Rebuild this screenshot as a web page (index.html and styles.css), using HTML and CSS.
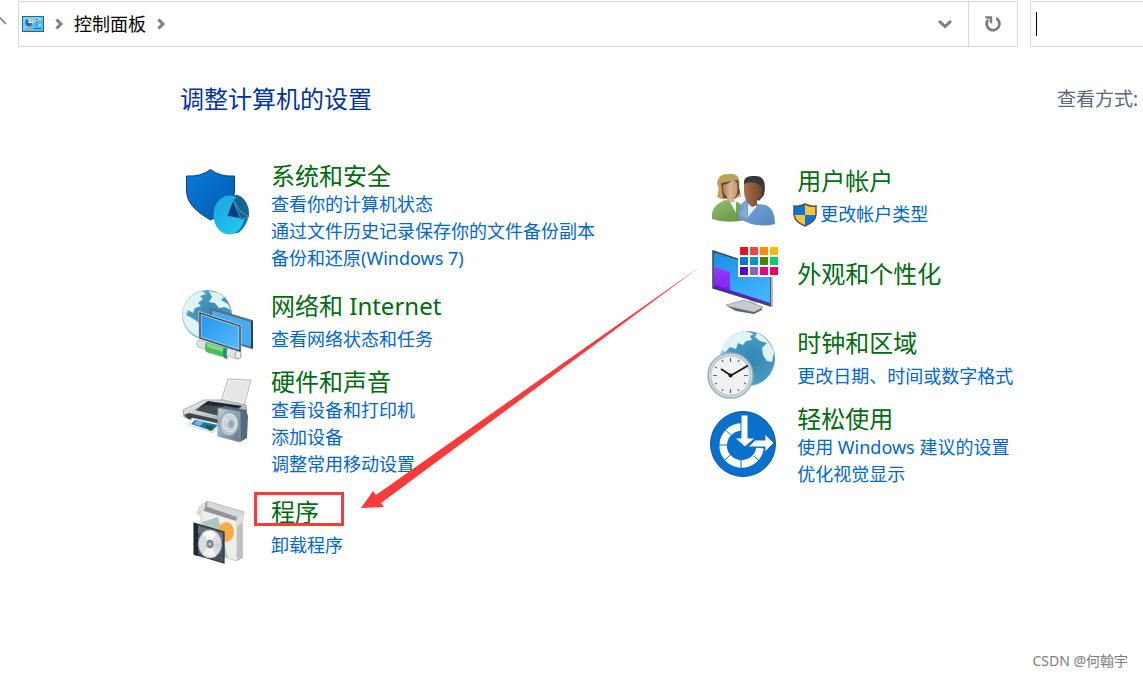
FILE: index.html
```html
<!DOCTYPE html>
<html lang="zh-CN">

<head>
  <meta charset="UTF-8">
  <meta name="viewport" content="width=device-width, initial-scale=1.0">
  <title>控制面板</title>
  <link rel="stylesheet" href="styles.css">
</head>

<body>
  <header class="toolbar">
    <button class="up-button" aria-label="向上">
      <svg width="18" height="46" viewBox="0 0 18 46"><path d="M-3 19L-1 16L6 23" fill="none" stroke="#858585" stroke-width="1.6" /></svg>
    </button>
    <nav class="address-bar" aria-label="地址">
      <svg class="panel-icon" width="22" height="16" viewBox="0 0 22 16">
        <rect x=".5" y=".5" width="21" height="15" fill="#7fd0fb" stroke="#176a9f" />
        <path d="M1 15L21 1V15Z" fill="#58b9ef" />
        <circle cx="7" cy="6.5" r="3.7" fill="#fff" />
        <path d="M6.5 3A3.7 3.7 0 1 0 10.5 7H6.5Z" fill="#1572b8" />
        <path d="M7.5 2.5A3.5 3.5 0 0 1 10.8 6H7.5Z" fill="#f8b64c" />
        <path d="M14 3.5h1.5M14 6.5h1.5M14 9h1.5" stroke="#16659c" />
        <path d="M16.5 3.5H19M16.5 9H19" stroke="#e8f8ff" />
        <path d="M16.5 6.5H19" stroke="#f39a3b" />
        <path d="M3 12.5h7" stroke="#f4ae3e" />
        <path d="M12 12.5h7" stroke="#1268a5" />
      </svg>
      <svg class="chevron" width="8" height="12" viewBox="0 0 8 12"><path d="M1.5 1.5L6 6L1.5 10.5" /></svg>
      <a class="crumb" href="#">控制面板</a>
      <svg class="chevron" width="8" height="12" viewBox="0 0 8 12"><path d="M1.5 1.5L6 6L1.5 10.5" /></svg>
      <button class="history-button" aria-label="以前的位置">
        <svg class="chevron" width="14" height="10" viewBox="0 0 14 10"><path d="M1 2L7 7.5L13 2" /></svg>
      </button>
      <button class="refresh-button" aria-label="刷新">
        <svg width="18" height="18" viewBox="0 0 18 18">
          <path d="M12.2 3.2A6.4 6.4 0 1 1 4.2 4.6" fill="none" stroke="#7d7d7d" stroke-width="2.8" />
          <path d="M1.2 1.2H8.2V8.2H5.8V4L1.2 3.2Z" fill="#7d7d7d" />
        </svg>
      </button>
    </nav>
    <input class="search-box" type="text" aria-label="搜索控制面板">
  </header>

  <main class="content">
    <div class="title-row">
      <h1>调整计算机的设置</h1>
      <span class="view-by">查看方式:</span>
    </div>

    <div class="categories">
      <div class="column">
        <section class="item multi">
          <svg class="icon" viewBox="0 0 76 76">
            <defs>
              <linearGradient id="shield" x2="1" y2="1"><stop stop-color="#087cdb" /><stop offset="1" stop-color="#0259af" /></linearGradient>
              <linearGradient id="disk" x2="1" y2="1"><stop stop-color="#16a6df" /><stop offset="1" stop-color="#28c8f4" /></linearGradient>
            </defs>
            <path d="M6.500 18Q21 19 30.500 11.500Q40 19 54.500 18V34Q53 53 30.500 62Q7 49 6.500 34Z" fill="url(#shield)" stroke="#10456e" />
            <path d="M50 37L58 37Q69 42 69 56Q67 69 58 75L50 76Z" fill="#0878ad" />
            <ellipse cx="49" cy="57" rx="15.500" ry="19.500" fill="url(#disk)" />
            <path d="M53 42Q60 47 64 61L47 58Z" fill="#0a5db2" />
            <path d="M53 42L60 38Q68 43 69 59L61 62Z" fill="#17618e" />
            <path d="M53 42L60 59L47 58Z" fill="#073f83" />
            <path d="M53 42L47 58L61 61.500L53 42L60 53L69 59L61 61.500" fill="none" stroke="#55abd6" stroke-width=".8" />
          </svg>
          <div class="text">
            <h2><a href="#">系统和安全</a></h2>
            <a href="#">查看你的计算机状态</a>
            <a href="#">通过文件历史记录保存你的文件备份副本</a>
            <a href="#">备份和还原(Windows 7)</a>
          </div>
        </section>

        <section class="item">
          <svg class="icon" viewBox="0 0 76 76">
            <defs>
              <radialGradient id="globe" cx=".6" cy=".5" r=".6"><stop stop-color="#2f87b5" /><stop offset=".75" stop-color="#4a9bc3" /><stop offset="1" stop-color="#a8d2e3" /></radialGradient>
              <linearGradient id="screen" x2="1" y2="1"><stop stop-color="#2295ed" /><stop offset="1" stop-color="#55bcff" /></linearGradient>
            </defs>
            <circle cx="27" cy="27" r="25" fill="url(#globe)" />
            <path d="M7 13Q13 5 22 3L26 6L20 8L23 11L18 15L21 18L15 20L13 25L8 22L6 27L12 30L18 34L20 42L19 49Q5 43 3 29Q2 20 7 13Z" fill="#e2f3f5" />
            <path d="M29 3L38 5L44 9L41 12L48 16L51 22L45 19L39 20L35 15L29 14L32 9Z" fill="#e2f3f5" />
            <path d="M31 21L72 33V60L31 48Z" fill="#45abf3" stroke="#606a74" stroke-width="2" />
            <path d="M72 33V60" stroke="#343e49" stroke-width="2" />
            <path d="M18 52L59 63Q63 67 58 71L18 59Q15 55 18 52Z" fill="#e2e3e4" stroke="#b8bdc0" />
            <path d="M26 54L47 60L46 70L26 64Q24 59 26 54Z" fill="#4dbd59" />
            <path d="M27 55L44 60V64L27 59Z" fill="#85db84" />
            <path d="M44 59L48 60Q45 65 48 71L44 70Q42 64 44 59Z" fill="#22936a" />
            <ellipse cx="58" cy="67" rx="3" ry="4" fill="#eee" stroke="#a5a5a5" />
            <path d="M20 25L60 38V63L20 50Z" fill="url(#screen)" stroke="#c9d4dc" stroke-width="3" />
            <path d="M20 25L60 38V63L20 50Z" fill="none" stroke="#384d60" stroke-width="1.500" />
          </svg>
          <div class="text">
            <h2><a href="#">网络和 Internet</a></h2>
            <a href="#">查看网络状态和任务</a>
          </div>
        </section>

        <section class="item multi">
          <svg class="icon" viewBox="0 0 76 76">
            <defs>
              <linearGradient id="metal" x2="1" y2="1"><stop stop-color="#eef0f1" /><stop offset="1" stop-color="#8c969c" /></linearGradient>
              <linearGradient id="speaker" x2="1" y2="1"><stop stop-color="#c6d2da" /><stop offset="1" stop-color="#5f7789" /></linearGradient>
            </defs>
            <path d="M48 15L71 16L64 42L41 37Z" fill="#eee" stroke="#b9b9b9" />
            <path d="M50 17L69 18L63 38L44 35Z" fill="#e5e6e7" />
            <path d="M3 46L24 36L43 36L66 41L67 47L45 63L4 53Z" fill="url(#metal)" stroke="#a8adb0" />
            <path d="M15 46L29 38L62 42L48 54Z" fill="#454b4e" />
            <path d="M18 44L28 37L62 42L57 44L26 41Z" fill="#22272a" />
            <path d="M4 51L9 49L40 56L40 62L8 55Z" fill="#40474b" />
            <path d="M12 54L40 60L33 69L8 61Z" fill="#f8fafc" stroke="#c0d0d8" stroke-width=".7" />
            <path d="M15 56L38 61L32 67L11 60Z" fill="#1b78bf" />
            <path d="M17 56L24 58L20 62L14 60Z" fill="#71b8d4" />
            <path d="M24 61L35 62L30 67Z" fill="#245d33" />
            <path d="M38 44L45 42L66 46L68 52L67 74L60 78L38 72Z" fill="#526b7e" />
            <path d="M38 44L60 48V78L38 72Z" fill="url(#speaker)" stroke="#8ca0ad" />
            <ellipse cx="49" cy="60" rx="9.500" ry="12" fill="#b8c5cd" stroke="#8196a4" />
            <ellipse cx="50" cy="59" rx="7" ry="9" fill="#c9d3d9" stroke="#e5ebee" />
            <ellipse cx="51" cy="60" rx="3" ry="4" fill="#9aabb6" />
            <path d="M44 54L49 58" stroke="#eef2f3" />
          </svg>
          <div class="text">
            <h2><a href="#">硬件和声音</a></h2>
            <a href="#">查看设备和打印机</a>
            <a href="#">添加设备</a>
            <a href="#">调整常用移动设置</a>
          </div>
        </section>

        <section class="item">
          <svg class="icon" viewBox="0 0 76 76">
            <path d="M20 13L27 7L64 18L56 24Z" fill="#aaa" />
            <path d="M27 7L64 18L62 30L27 19Z" fill="#d7d8da" stroke="#aeb0b2" stroke-width=".7" />
            <path d="M21 13L57 24V67L21 56Z" fill="#eeeeed" stroke="#ccc" />
            <path d="M57 24L63 19V64L57 67Z" fill="#bfc1c3" />
            <path d="M19 13L22 11L57 23L56 27L21 16Z" fill="#929598" />
            <path d="M19 12L25 8V14L20 22L16 20Z" fill="#dcdcdc" />
            <path d="M57 24L65 18L63 28L57 33Z" fill="#ddd" />
            <path d="M22 28L38 23L48 64L33 60Z" fill="#adc9bc" />
            <ellipse cx="46" cy="38" rx="8" ry="10" fill="#f7ad42" />
            <path d="M14 29L44 38V69L14 60Z" fill="#465461" stroke="#26323c" stroke-width="1.200" />
            <path d="M14 29L18 31V62L14 61Z" fill="#1d2934" />
            <path d="M18 32L43 39V46L18 39Z" fill="#667380" />
            <ellipse cx="30" cy="50" rx="11.500" ry="14" fill="#ddd" stroke="#b6babb" />
            <path d="M30 50L23 39Q30 34 36 40Z" fill="#f9f9f9" />
            <path d="M30 50L36 61Q31 65 23 60Z" fill="#f3f3f3" />
            <path d="M30 50L41 49L41 56Z" fill="#c8d2d7" />
            <ellipse cx="30" cy="50" rx="3" ry="4" fill="#8294a2" stroke="#6c7e8c" />
            <circle cx="30" cy="50" r="1" fill="#eee" />
          </svg>
          <div class="text">
            <h2><a href="#">程序</a></h2>
            <a href="#">卸载程序</a>
          </div>
        </section>
      </div>

      <div class="column">
        <section class="item users">
          <svg class="icon" viewBox="0 0 76 76">
            <defs>
              <linearGradient id="green" x2="1" y2="1"><stop stop-color="#98bd71" /><stop offset="1" stop-color="#5e913e" /></linearGradient>
              <linearGradient id="blue" x2="1" y2="1"><stop stop-color="#77a5d8" /><stop offset="1" stop-color="#5788c2" /></linearGradient>
              <linearGradient id="skin"><stop stop-color="#b37d5b" /><stop offset=".5" stop-color="#dbb594" /><stop offset="1" stop-color="#c3987b" /></linearGradient>
              <linearGradient id="brown"><stop stop-color="#a9714e" /><stop offset="1" stop-color="#71462b" /></linearGradient>
            </defs>
            <path d="M6 56V50Q8 41 19 37L31 39Q40 42 40 57Q20 61 6 56Z" fill="url(#green)" />
            <path d="M24 39L30 37V50Z" fill="#edf5e6" />
            <path d="M11 34Q14 25 11 21Q12 10 22 11Q36 9 33 25L35 33L29 36L16 36Z" fill="#b8a45c" />
            <path d="M15 20L32 17L34 30L28 36L17 35Z" fill="#6d4839" />
            <path d="M17 22Q23 21 27 17L31 20Q33 31 28 35L28 39L21 38V34Q16 29 17 22Z" fill="url(#skin)" />
            <path d="M32 55Q32 44 38 38L41 37L51 41L60 42Q69 46 69 61Q50 66 32 55Z" fill="url(#blue)" />
            <path d="M42 41L51 43L42 54Z" fill="#e5f0f7" />
            <path d="M40 40L42 56L34 52Z" fill="#84add8" />
            <path d="M38 21Q37 12 48 13Q62 12 58 32L53 38Z" fill="#363a3d" />
            <path d="M38 21Q43 18 50 20L56 24V32L51 38V42L46 44L42 40Q37 35 38 21Z" fill="url(#brown)" />
          </svg>
          <div class="text">
            <h2><a href="#">用户帐户</a></h2>
            <a class="with-shield" href="#">
              <svg width="24" height="24" viewBox="0 0 24 24">
                <path d="M1 3Q7 4 12 1Q17 4 23 3V12Q22 19 12 23Q2 19 1 12Z" fill="#ffc33b" />
                <path d="M1 3Q7 4 12 1V12H1ZM12 12H23Q22 19 12 23Z" fill="#0877d2" />
                <path d="M1 3Q7 4 12 1Q17 4 23 3V12Q22 19 12 23Q2 19 1 12Z" fill="none" stroke="#4b5359" stroke-width="1.500" />
              </svg>更改帐户类型</a>
          </div>
        </section>

        <section class="item title-only">
          <svg class="icon" viewBox="0 0 76 76">
            <defs>
              <linearGradient id="monitor" x2=".5" y2="1"><stop stop-color="#178ce4" /><stop offset="1" stop-color="#42b4ff" /></linearGradient>
              <linearGradient id="purple" x2="0" y2="1"><stop stop-color="#9a3afb" /><stop offset="1" stop-color="#7a22ee" /></linearGradient>
            </defs>
            <path d="M43 60H51V68H43Z" fill="#d2d5d7" />
            <path d="M20 66L38 61L57 68L49 74L29 71Z" fill="#c6cbcf" stroke="#8a8f93" stroke-width=".7" />
            <path d="M21 67L48 73L56 69V71L48 75L30 72Z" fill="#62696e" />
            <path d="M7 12L65 31V67L7 49Z" fill="url(#monitor)" stroke="#444" stroke-width="1.500" />
            <path d="M8 28L24 33V53L8 48Z" fill="url(#purple)" />
            <path d="M8 46L64 64V66L8 49Z" fill="#5821bd" />
            <path d="M66 30V68" stroke="#bbb" stroke-width="2" />
            <path d="M32 6H73V38H32Z" fill="#fff" />
            <path d="M34 8h8v8h-8z" fill="#e81123" /><path d="M44 8h8v8h-8z" fill="#ff4343" /><path d="M54 8h8v8h-8z" fill="#ff8c00" /><path d="M64 8h8v8h-8z" fill="#ffb900" />
            <path d="M34 18h8v8h-8z" fill="#0078d7" /><path d="M44 18h8v8h-8z" fill="#0099bc" /><path d="M54 18h8v8h-8z" fill="#498205" /><path d="M64 18h8v8h-8z" fill="#00cc6a" />
            <path d="M34 28h8v8h-8z" fill="#5a00c8" /><path d="M44 28h8v8h-8z" fill="#8764b8" /><path d="M54 28h8v8h-8z" fill="#e3008c" /><path d="M64 28h8v8h-8z" fill="#ea005e" />
          </svg>
          <div class="text">
            <h2><a href="#">外观和个性化</a></h2>
          </div>
        </section>

        <section class="item">
          <svg class="icon" viewBox="0 0 76 76">
            <circle cx="41.500" cy="33.500" r="27.500" fill="url(#globe)" />
            <path d="M18 18Q26 8 39 6L48 9L44 11L46 15L40 16L37 20L32 18L30 24L24 22L19 27L15 25Z" fill="#e2f3f5" />
            <path d="M51 8Q63 13 68 27L66 37L61 36L57 30L56 23L61 18L54 16L49 12Z" fill="#e2f3f5" />
            <circle cx="24.500" cy="50.500" r="22.500" fill="#dfe3e5" stroke="#9bacb6" stroke-width="1.500" />
            <circle cx="24.500" cy="50.500" r="20" fill="#f0f1f2" stroke="#bdcbd2" stroke-width="2" />
            <path d="M24.500 33V37M24.500 64V68M7 50.500H11M38 50.500H42M16 35L17 37M33 35L32 37M9 42L11 43M9 59L11 58M16 66L17 64M33 66L32 64M40 59L38 58M40 42L38 43" stroke="#606669" stroke-width="1.200" />
            <path d="M15 44L25 50.500L42 40.500" fill="none" stroke="#15191c" stroke-width="1.800" />
            <circle cx="24.500" cy="50.500" r="2" fill="#15191c" />
          </svg>
          <div class="text">
            <h2><a href="#">时钟和区域</a></h2>
            <a href="#">更改日期、时间或数字格式</a>
          </div>
        </section>

        <section class="item multi">
          <svg class="icon" viewBox="0 0 76 76">
            <circle cx="37" cy="43" r="32.500" fill="#0870cd" stroke="#155a91" />
            <path d="M36 26A18.500 18.500 0 1 0 54 47" fill="none" stroke="#fff" stroke-width="7.500" />
            <path d="M12 44H21M35 59V68M18 28L25 34M17 61L24 54M48 55L55 62" stroke="#0870cd" stroke-width="1" />
            <path d="M35 14H42V37H49L39 46L29 37H35Z" fill="#fff" stroke="#0870cd" />
            <path d="M49 39H59V33L68 42L59 51V46H42Z" fill="#fff" stroke="#0870cd" />
          </svg>
          <div class="text">
            <h2><a href="#">轻松使用</a></h2>
            <a href="#">使用 Windows 建议的设置</a>
            <a href="#">优化视觉显示</a>
          </div>
        </section>
      </div>
    </div>

    <!-- marks the programs entry -->
    <div class="highlight"></div>
    <svg class="arrow" width="342" height="244" viewBox="0 0 342 244">
      <path d="M0 242L12 225L15 229L340 0L20 237L23 241Z" fill="#fb3a3a" />
    </svg>
  </main>

  <footer class="watermark">CSDN @何翰宇</footer>
</body>

</html>
```

FILE: styles.css
```css
/* styles.css */
* {
  box-sizing: border-box;
}

body {
  font-family: "Noto Sans", "Noto Sans CJK SC", sans-serif;
  font-size: 18px;
  line-height: 27px;
  background-color: #fff;
  color: #000;
  margin: 0;
  min-height: 100vh;
  position: relative;
}

a {
  color: #0066cc;
  text-decoration: none;
}

a:hover {
  text-decoration: underline;
}

button {
  background: none;
  border: none;
  padding: 0;
  display: flex;
  align-items: center;
  justify-content: center;
}

.toolbar {
  display: flex;
  height: 47px;
  padding-top: 1px;
}

.up-button {
  width: 18px;
}

.address-bar {
  flex: 1;
  display: flex;
  align-items: center;
  border: 1px solid #d9d9d9;
  padding-left: 3px;
}

.chevron {
  fill: none;
  stroke: #7d7d7d;
  stroke-width: 3;
}

.panel-icon {
  margin-right: 11px;
}

.crumb {
  color: #000;
  margin: 0 11px;
}

.history-button {
  width: 46px;
  height: 100%;
  margin-left: auto;
}

.refresh-button {
  width: 49px;
  height: 100%;
  border-left: 1px solid #d9d9d9;
}

/* the caret is painted as a background line */
.search-box {
  width: 113px;
  margin-left: 12px;
  padding: 0 8px;
  font: inherit;
  border: 1px solid #d9d9d9;
  border-right: none;
  border-radius: 0;
  outline: none;
  background: linear-gradient(#000, #000) 5px 50% / 1px 24px no-repeat;
}

.content {
  position: relative;
  padding-left: 180px;
}

.title-row {
  display: flex;
  justify-content: space-between;
  align-items: center;
  padding: 37px 5px 0 0;
}

h1 {
  font-size: 24px;
  line-height: 30px;
  font-weight: 400;
  color: #003399;
  margin: 0;
}

.view-by {
  font-size: 19px;
  color: #5a677d;
}

.categories {
  display: grid;
  grid-template-columns: 6fr 5fr;
  column-gap: 2px;
  padding-top: 44px;
}

.item {
  display: flex;
  gap: 15px;
  min-height: 76px;
}

.icon {
  width: 76px;
  height: 76px;
  flex: none;
  overflow: visible;
}

.text {
  padding-top: 4px;
}

.text > a {
  display: block;
}

h2 {
  font-size: 24px;
  line-height: 28px;
  font-weight: 400;
  margin: 0 0 6px;
}

h2 a {
  color: #006b0f;
}

.multi {
  padding-bottom: 16px;
}

.multi h2 {
  margin-bottom: 1px;
}

.users {
  margin-top: 5px;
}

.title-only {
  min-height: 86px;
}

.title-only .text {
  padding-top: 21px;
}

.text > .with-shield {
  display: flex;
  align-items: center;
  margin-left: -4px;
  gap: 3px;
}

.highlight {
  position: absolute;
  left: 254px;
  top: 445px;
  width: 90px;
  height: 34px;
  border: 3px solid #fb3a3a;
}

.arrow {
  position: absolute;
  left: 361px;
  top: 219px;
}

.watermark {
  position: absolute;
  right: 15px;
  bottom: 3px;
  font-size: 14px;
  color: #7d7d7d;
}
```
